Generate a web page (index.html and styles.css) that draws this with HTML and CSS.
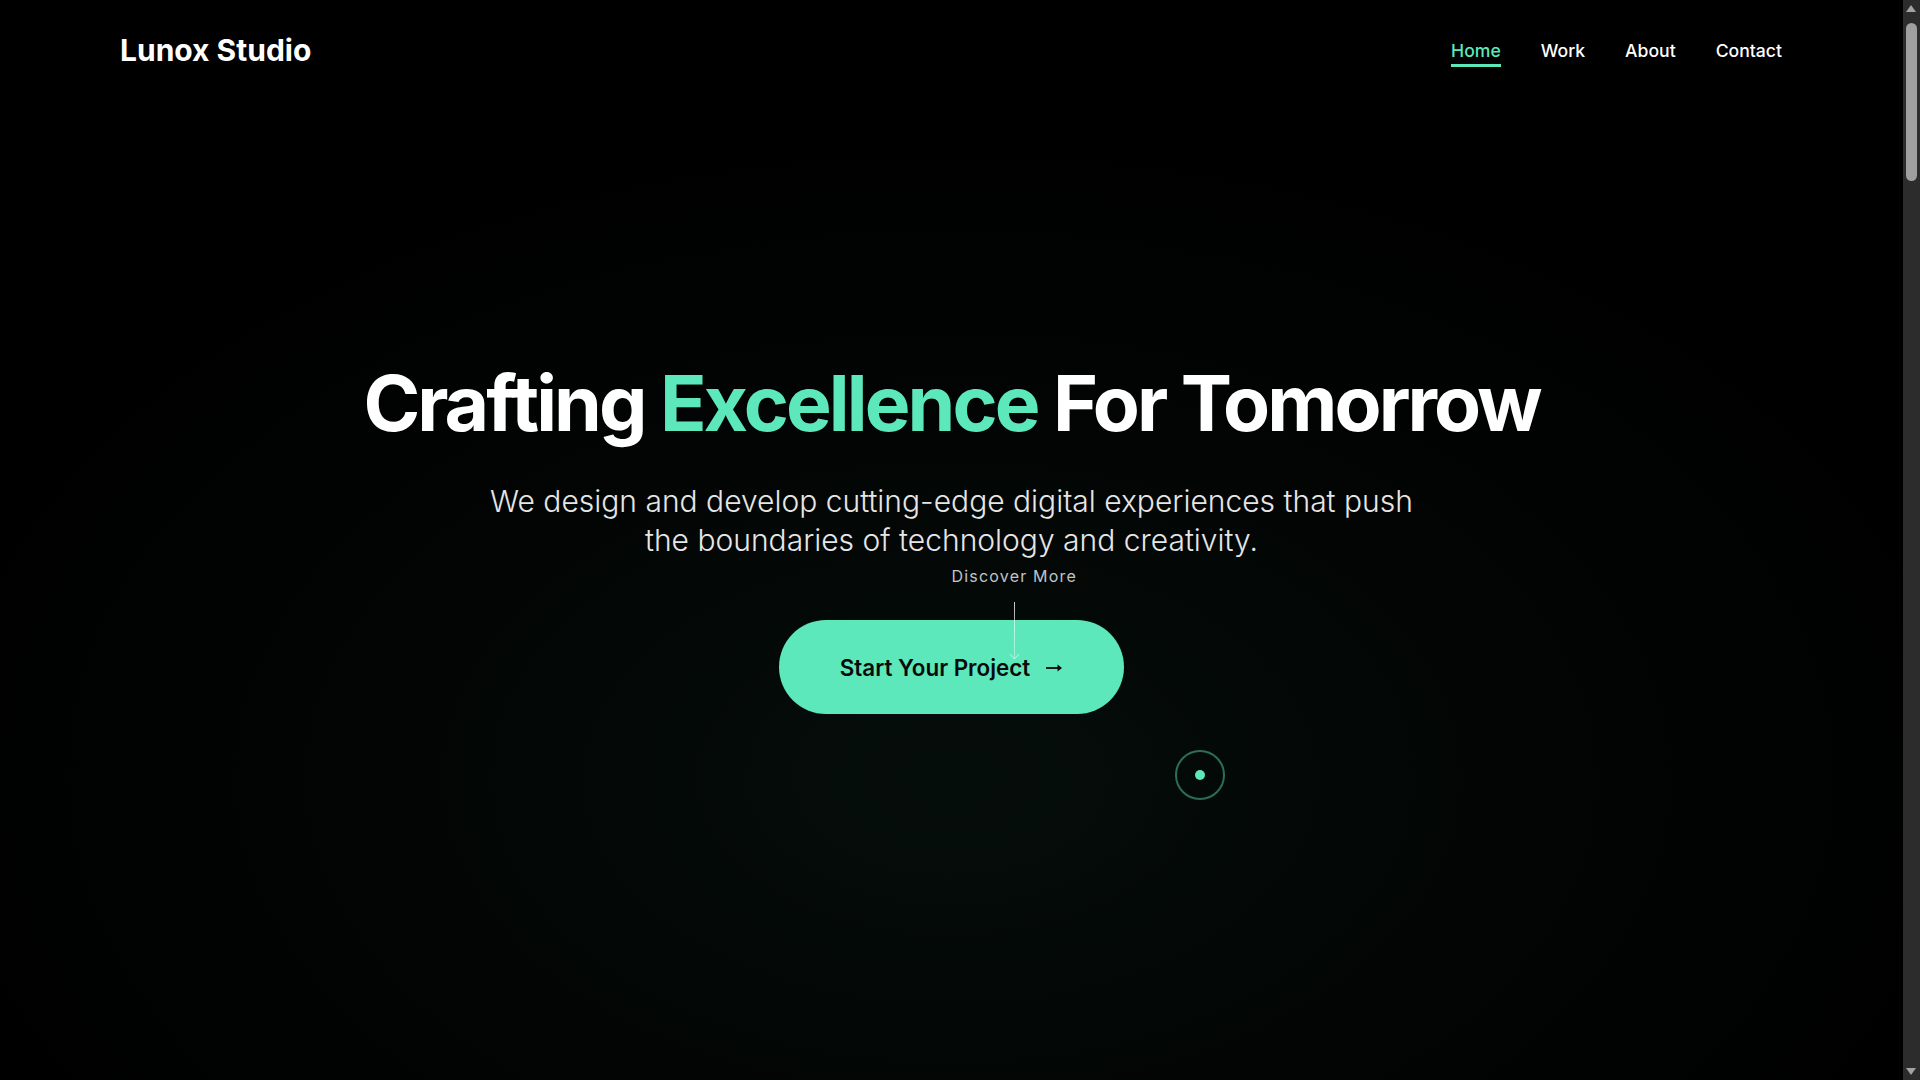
FILE: index.html
```html
<!DOCTYPE html>
<html lang="en">
<head>
<meta charset="utf-8">
<title>Lunox Studio</title>
<link rel="stylesheet" href="styles.css">
</head>
<body>
<div class="page">
  <header class="site-header">
    <a class="logo" href="#">Lunox Studio</a>
    <nav class="nav">
      <a class="nav-link active" href="#">Home</a>
      <a class="nav-link" href="#">Work</a>
      <a class="nav-link" href="#">About</a>
      <a class="nav-link" href="#">Contact</a>
    </nav>
  </header>
  <main>
    <section class="hero">
      <div class="hero-content">
        <h1 class="hero-title">Crafting <span class="accent">Excellence</span> For Tomorrow</h1>
        <p class="hero-sub">We design and develop cutting-edge digital experiences that push the boundaries of technology and creativity.</p>
        <a class="cta" href="#"><span>Start Your Project</span><svg class="cta-arrow" width="17" height="10" viewBox="0 0 17 10" aria-hidden="true"><path d="M0 5H15" stroke="#0a0a0a" stroke-width="1.8"/><path d="M11.5 1.6L16 5L11.5 8.4Z" fill="#0a0a0a"/></svg></a>
      </div>
      <div class="scroll-indicator">
        <span class="scroll-text">Discover More</span>
        <span class="scroll-line"></span>
      </div>
    </section>
  </main>
  <div class="cursor-ring"></div>
  <div class="cursor-dot"></div>
</div>
<div class="scrollbar" aria-hidden="true">
  <span class="sb-arrow sb-up"></span>
  <span class="sb-thumb"></span>
  <span class="sb-arrow sb-down"></span>
</div>
</body>
</html>
```

FILE: styles.css
```css
* { box-sizing: border-box; margin: 0; padding: 0; }

html, body {
  background: #000;
  color: #fff;
  font-family: Inter, "Noto Sans", "Liberation Sans", sans-serif;
  overflow: hidden;
}

a { text-decoration: none; color: inherit; }

.page {
  position: relative;
  width: calc(100% - 17px);
  height: 1080px;
  overflow: hidden;
}

.site-header {
  position: absolute;
  top: 0;
  left: 0;
  right: 0;
  z-index: 10;
  display: flex;
  justify-content: space-between;
  align-items: center;
  padding: 32px 121px 32px 120px;
}

.logo {
  font-size: 30px;
  font-weight: 700;
  color: #fff;
}

.nav {
  display: flex;
  gap: 40px;
}

.nav-link {
  position: relative;
  font-size: 17.6px;
  font-weight: 500;
  color: #fff;
}

.nav-link.active { color: #5de8bc; }

.nav-link.active::after {
  content: "";
  position: absolute;
  left: 0;
  right: 0;
  bottom: -6px;
  height: 3px;
  background: #5de8bc;
}

.hero {
  position: relative;
  height: 1080px;
  display: flex;
  align-items: center;
  justify-content: center;
  padding-bottom: 4px;
  background:
    radial-gradient(ellipse 55% 60% at 50% 72%, rgba(93, 232, 188, 0.06) 0%, rgba(93, 232, 188, 0.022) 50%, rgba(0, 0, 0, 0) 100%),
    #000;
}

.hero-content {
  display: flex;
  flex-direction: column;
  align-items: center;
  text-align: center;
}

.hero-title {
  font-size: 76.8px;
  line-height: 1.1;
  font-weight: 700;
  letter-spacing: -2.9px;
  margin-bottom: 36px;
}

.accent { color: #5de8bc; }

.hero-sub {
  font-size: 30px;
  line-height: 39px;
  font-weight: 300;
  color: #e6e6e6;
  max-width: 945px;
  margin-bottom: 60px;
}

.cta {
  display: inline-flex;
  align-items: center;
  gap: 16px;
  height: 94px;
  padding: 0 61px;
  border-radius: 999px;
  background: #5de8bc;
  color: #0a0a0a;
  font-size: 22.4px;
  font-weight: 600;
}

.cta-arrow { display: block; margin-top: 2px; }

.scroll-indicator {
  position: absolute;
  top: 566px;
  left: 50%;
  display: flex;
  flex-direction: column;
  align-items: center;
  gap: 16px;
  z-index: 2;
}

.scroll-text {
  font-size: 16px;
  letter-spacing: 1.2px;
  color: rgba(225, 232, 240, 0.85);
}

.scroll-line {
  position: relative;
  width: 1px;
  height: 56px;
  background: linear-gradient(to bottom, rgba(255, 255, 255, 0.8), rgba(255, 255, 255, 0.35));
}

.scroll-line::after {
  content: "";
  position: absolute;
  left: -3px;
  bottom: 0;
  width: 6px;
  height: 6px;
  border-right: 1px solid rgba(255, 255, 255, 0.45);
  border-bottom: 1px solid rgba(255, 255, 255, 0.45);
  transform: rotate(45deg);
}

.cursor-ring {
  position: absolute;
  left: 1175px;
  top: 750px;
  width: 50px;
  height: 50px;
  border: 2px solid rgba(93, 232, 188, 0.45);
  border-radius: 50%;
  z-index: 20;
}

.cursor-dot {
  position: absolute;
  left: 1195px;
  top: 770px;
  width: 10px;
  height: 10px;
  border-radius: 50%;
  background: #5de8bc;
  z-index: 21;
}

.scrollbar {
  position: fixed;
  top: 0;
  right: 0;
  bottom: 0;
  width: 17px;
  background: #2c2c2c;
}

.sb-thumb {
  position: absolute;
  left: 3px;
  right: 3px;
  top: 23px;
  height: 158px;
  border-radius: 6px;
  background: #9f9f9f;
}

.sb-arrow {
  position: absolute;
  left: 3px;
  width: 0;
  height: 0;
  border-left: 5.5px solid transparent;
  border-right: 5.5px solid transparent;
}

.sb-up {
  top: 5px;
  border-bottom: 7px solid #a3a3a3;
}

.sb-down {
  bottom: 5px;
  border-top: 7px solid #a3a3a3;
}
```
